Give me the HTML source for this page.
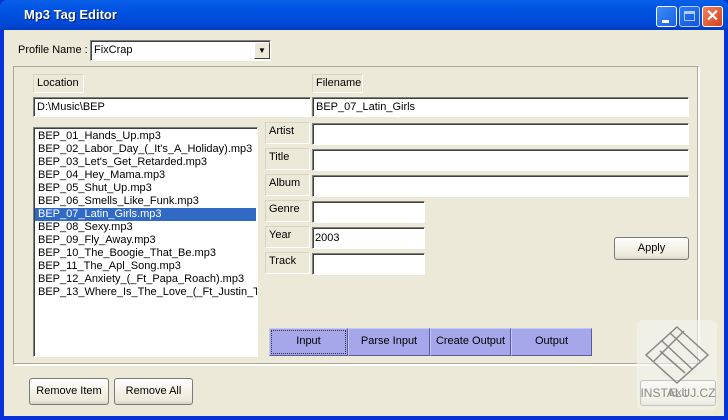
<!DOCTYPE html>
<html><head><style>
*{box-sizing:border-box;margin:0;padding:0}
body{width:728px;height:420px;overflow:hidden;font-family:"Liberation Sans",sans-serif;font-size:11px;background:#0831d9;position:relative}
.a{position:absolute}
#title{left:0;top:0;width:728px;height:30px;background:linear-gradient(#0a5fe8,#0054e3 30%,#0148d6 80%,#003dbf);border-radius:7px 7px 0 0}
#title span{position:absolute;left:24px;top:7px;color:#fff;font-weight:bold;font-size:13px;text-shadow:1px 1px #0a1e6e}
#client{left:4px;top:30px;width:720px;height:386px;background:#ece9d8}
.tb{background:#fff;border-top:1px solid #808080;border-left:1px solid #808080;border-right:1px solid #fff;border-bottom:1px solid #fff;box-shadow:inset 1px 1px #404040;padding:3px 3px;white-space:nowrap;overflow:hidden}
.lab{border:1px solid;border-color:#d8d4c4 #fff #fff #d8d4c4;padding:2px 3px}
.btn{background:linear-gradient(#fff,#ece9d8 85%,#d6d0c5);border:1px solid #7a7a7a;border-radius:3px;text-align:center;line-height:25px;font-size:11px}
.tab{background:#a6a6ea;border:1px solid;border-color:#c8c8f4 #5a5aa0 #5a5aa0 #c8c8f4;text-align:center;line-height:25px;font-size:11px}
.wb{top:6px;width:21px;height:21px;border:1px solid #fff;border-radius:3px;background:linear-gradient(135deg,#3c8cf8,#1b5ee6)}
.li div{height:13px;line-height:13px;padding-left:3px;white-space:nowrap}
</style></head><body>
<div id="title" class="a"><span>Mp3 Tag Editor</span>
<div class="a wb" style="left:656px"><div class="a" style="left:5px;top:13px;width:7px;height:3px;background:#fff"></div></div>
<div class="a wb" style="left:679px;opacity:.7"><div class="a" style="left:4px;top:4px;width:11px;height:10px;border:1px solid #fff;border-top-width:3px"></div></div>
<div class="a wb" style="left:702px;background:linear-gradient(135deg,#f08060,#d3421a);color:#fff;font-size:16px;text-align:center;line-height:19px;font-weight:bold">✕</div>
</div>
<div id="client" class="a"></div>
<div class="a" style="left:18px;top:44px;font-size:11px">Profile Name :</div>
<div class="a tb" style="left:90px;top:40px;width:181px;height:21px;padding:3px">FixCrap</div>
<div class="a" style="left:254px;top:42px;width:16px;height:17px;background:#ece9d8;border:1px solid;border-color:#fff #404040 #404040 #fff;font-size:8px;text-align:center;line-height:15px">▼</div>
<div class="a" style="left:13px;top:66px;width:686px;height:299px;border:1px solid;border-color:#aca899 #fff #fff #aca899;box-shadow:inset -1px -1px #aca899,1px 1px #fff"></div>
<div class="a lab" style="left:33px;top:74px;width:51px;height:19px">Location</div>
<div class="a lab" style="left:312px;top:74px;width:51px;height:19px">Filename</div>
<div class="a tb" style="left:33px;top:97px;width:278px;height:20px">D:\Music\BEP</div>
<div class="a tb" style="left:312px;top:97px;width:377px;height:20px">BEP_07_Latin_Girls</div>
<div class="a tb li" style="left:33px;top:127px;width:225px;height:230px;padding:2px 1px">
<div>BEP_01_Hands_Up.mp3</div><div>BEP_02_Labor_Day_(_It's_A_Holiday).mp3</div><div>BEP_03_Let's_Get_Retarded.mp3</div><div>BEP_04_Hey_Mama.mp3</div><div>BEP_05_Shut_Up.mp3</div><div>BEP_06_Smells_Like_Funk.mp3</div><div style="background:#316ac5;color:#fff">BEP_07_Latin_Girls.mp3</div><div>BEP_08_Sexy.mp3</div><div>BEP_09_Fly_Away.mp3</div><div>BEP_10_The_Boogie_That_Be.mp3</div><div>BEP_11_The_Apl_Song.mp3</div><div>BEP_12_Anxiety_(_Ft_Papa_Roach).mp3</div><div>BEP_13_Where_Is_The_Love_(_Ft_Justin_Ti</div>
</div>
<div class="a lab" style="left:265px;top:122px;width:45px;height:22px">Artist</div>
<div class="a lab" style="left:265px;top:148px;width:45px;height:22px">Title</div>
<div class="a lab" style="left:265px;top:174px;width:45px;height:22px">Album</div>
<div class="a lab" style="left:265px;top:200px;width:45px;height:22px">Genre</div>
<div class="a lab" style="left:265px;top:226px;width:45px;height:22px">Year</div>
<div class="a lab" style="left:265px;top:252px;width:45px;height:22px">Track</div>
<div class="a tb" style="left:312px;top:123px;width:377px;height:22px"></div>
<div class="a tb" style="left:312px;top:149px;width:377px;height:22px"></div>
<div class="a tb" style="left:312px;top:175px;width:377px;height:22px"></div>
<div class="a tb" style="left:312px;top:201px;width:113px;height:22px"></div>
<div class="a tb" style="left:312px;top:227px;width:113px;height:22px;padding:4px 2px">2003</div>
<div class="a tb" style="left:312px;top:253px;width:113px;height:22px"></div>
<div class="a btn" style="left:614px;top:237px;width:75px;height:23px;line-height:21px">Apply</div>
<div class="a tab" style="left:269px;top:328px;width:79px;height:28px;outline:1px dotted #333;outline-offset:-3px">Input</div>
<div class="a tab" style="left:348px;top:328px;width:82px;height:28px">Parse Input</div>
<div class="a tab" style="left:430px;top:328px;width:81px;height:28px">Create Output</div>
<div class="a tab" style="left:511px;top:328px;width:81px;height:28px">Output</div>
<div class="a btn" style="left:29px;top:378px;width:80px;height:27px">Remove Item</div>
<div class="a btn" style="left:114px;top:378px;width:79px;height:27px">Remove All</div>
<div class="a btn" style="left:640px;top:380px;width:76px;height:26px">Exit</div>
<div class="a" style="left:637px;top:320px;width:80px;height:90px;background:rgba(245,245,240,.6);border-radius:6px"></div>
<svg class="a" style="left:640px;top:325px" width="75" height="60"><g fill="none" stroke="#888" stroke-width="1.5"><path d="M37 2L68 30L37 58L6 30Z"/><path d="M30 8L60 36M22 16L52 44M20 26L45 48M44 6L14 36"/></g></svg>
<div class="a" style="left:640px;top:386px;width:76px;text-align:center;color:#888;font-size:12px">INSTALUJ.CZ</div>
</body></html>
